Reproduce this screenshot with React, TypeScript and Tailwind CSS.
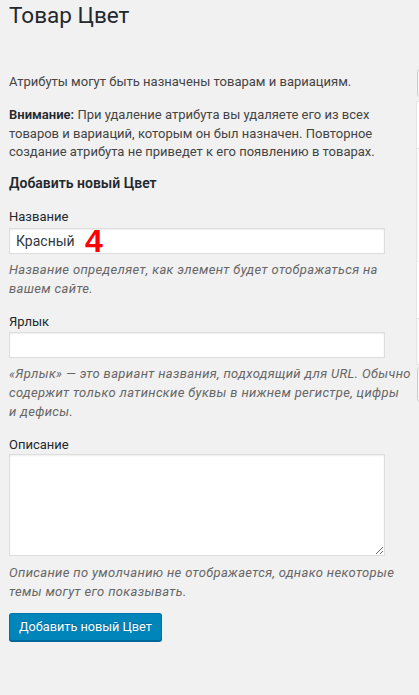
import React from 'react';

const hint = 'mt-[5.5px] text-[13px] leading-[19px] italic tracking-[0.35px] text-[#666]';
const label = 'block text-[13px] leading-[19px] text-[#23282d]';
const field =
  'block w-[95%] h-[26px] bg-white border border-[#ddd] shadow-[inset_0_1px_2px_rgba(0,0,0,0.07)] px-[6px] text-[14px] text-[#32373c] outline-none';

export default function App() {
  return (
    <div className="min-h-screen w-full overflow-hidden bg-[#f1f1f1] text-[13px] text-[#444] font-['Roboto','Noto_Sans',sans-serif]">
      {/* Title */}
      <h1 className="pl-[9px] h-[30px] text-[22.5px] leading-[30px] font-normal text-[#23282d]">
        Товар Цвет
      </h1>

      {/* Columns */}
      <div className="mt-[39px] flex">
        {/* Left column: add form */}
        <div className="w-[405px] shrink-0 pl-[9px]">
          <p className="mt-[4px] leading-[18.5px]">Атрибуты могут быть назначены товарам и вариациям.</p>
          <p className="mt-[14.5px] leading-[18.5px]">
            <strong className="font-semibold text-[#23282d]">Внимание:</strong> При удаление атрибута вы удаляете
            его из всех товаров и вариаций, которым он был назначен. Повторное создание атрибута не приведет к его
            появлению в товарах.
          </p>

          <h2 className="mt-[12px] text-[14px] leading-[19px] font-semibold text-[#23282d]">Добавить новый Цвет</h2>

          <label className={`${label} mt-[14px]`}>Название</label>
          <div className="relative mt-[2.5px]">
            <input className={field} defaultValue="Красный" />
            <span className="absolute left-[76px] -top-[3px] text-[32px] leading-none font-bold text-[#ff0000] font-['Liberation_Sans',Arial,sans-serif]">
              4
            </span>
          </div>
          <p className={hint}>Название определяет, как элемент будет отображаться на вашем сайте.</p>

          <label className={`${label} mt-[14px]`}>Ярлык</label>
          <input className={`${field} mt-[1.5px]`} />
          <p className={`${hint} whitespace-nowrap`}>
            «Ярлык» — это вариант названия, подходящий для URL. Обычно
            <br />
            содержит только латинские буквы в нижнем регистре, цифры
            <br />
            и дефисы.
          </p>

          <label className={`${label} mt-[14px]`}>Описание</label>
          <textarea className="block w-[95%] h-[102px] mt-[0.5px] bg-white border border-[#ddd] shadow-[inset_0_1px_2px_rgba(0,0,0,0.07)] resize-y outline-none" />
          <p className={`${hint} mt-[7px]`}>
            Описание по умолчанию не отображается, однако некоторые темы могут его показывать.
          </p>

          <button className="mt-[11.5px] h-[28px] px-[9px] rounded-[3px] bg-[#0085ba] border border-[#0073aa] border-b-[#006799] shadow-[0_1px_0_#006799] text-white text-[12.7px] leading-[26px] [text-shadow:0_-1px_1px_#006799]">
            Добавить новый Цвет
          </button>
        </div>

        {/* Right column: terms list (cut off) */}
        <div className="ml-[11px] w-[300px] shrink-0">
          <div className="h-[28px] w-[80px] ml-[1px] border border-[#ccc] bg-[#f7f7f7] rounded-[3px]" />
          <div className="mt-[4px] border border-[#e5e5e5] bg-white">
            <div className="h-[47px] border-b border-[#e1e1e1]" />
            <div className="h-[112px] bg-[#f9f9f9]" />
            <div className="h-[57px] border-t border-[#f1f1f1]" />
            <div className="h-[46px] bg-[#f9f9f9] border-t border-[#e1e1e1]" />
          </div>
          <div className="mt-[2px] h-[35px] w-[80px] ml-[1px] border border-[#ccc] bg-[#f7f7f7] rounded-[3px]" />
        </div>
      </div>
    </div>
  );
}
